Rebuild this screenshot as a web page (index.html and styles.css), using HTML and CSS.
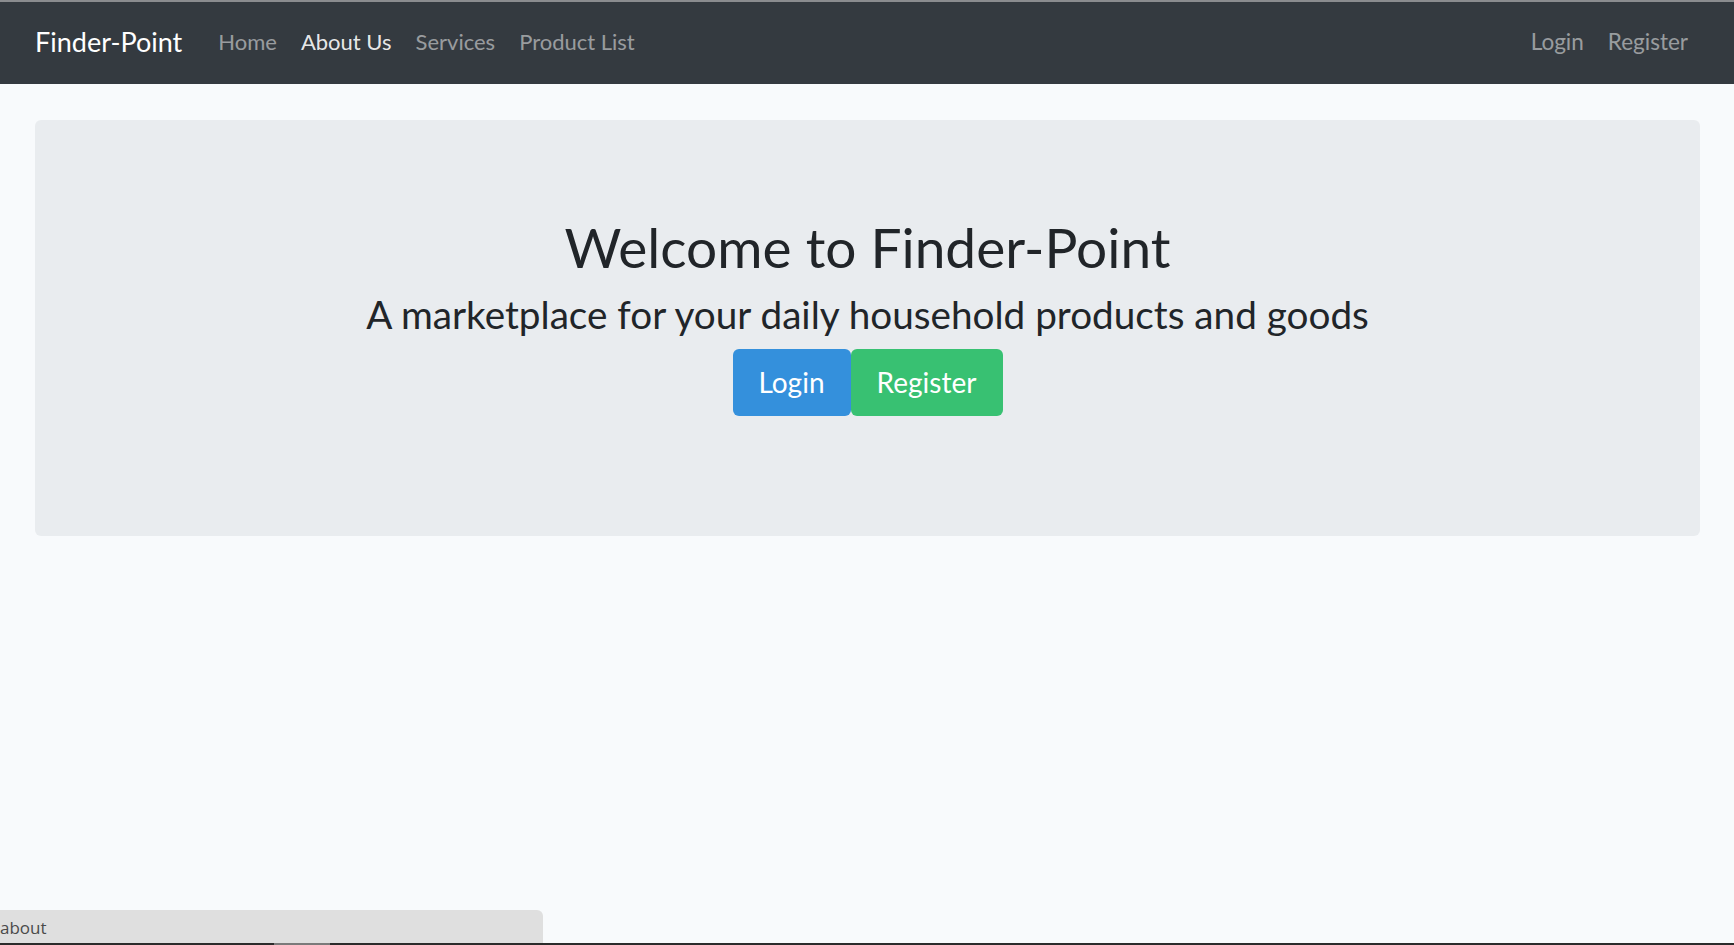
FILE: index.html
```html
<!DOCTYPE html>
<html lang="en">
<head>
<meta charset="utf-8">
<title>Finder-Point</title>
<link rel="stylesheet" href="styles.css">
</head>
<body>
<nav class="navbar">
  <a class="brand" href="#">Finder-Point</a>
  <ul class="nav-left">
    <li><a class="nav-link" href="#">Home</a></li>
    <li><a class="nav-link active" href="#">About Us</a></li>
    <li><a class="nav-link" href="#">Services</a></li>
    <li><a class="nav-link" href="#">Product List</a></li>
  </ul>
  <ul class="nav-right">
    <li><a class="nav-link" href="#">Login</a></li>
    <li><a class="nav-link" href="#">Register</a></li>
  </ul>
</nav>
<main class="content">
  <section class="jumbotron">
    <h1 class="title">Welcome to Finder-Point</h1>
    <h3 class="subtitle">A marketplace for your daily household products and goods</h3>
    <div class="actions">
      <a class="btn btn-primary" href="#">Login</a>
      <a class="btn btn-success" href="#">Register</a>
    </div>
  </section>
</main>
<div class="status-bubble">about</div>
<div class="bottom-edge"><span class="edge-thumb"></span></div>
</body>
</html>
```
FILE: styles.css
```css
html, body {
  margin: 0;
  padding: 0;
}
body {
  background: #f8fafc;
  font-family: "Lato", "Nunito", "Open Sans", sans-serif;
  color: #212529;
  height: 945px;
  overflow: hidden;
  position: relative;
}
a { text-decoration: none; }
ul { list-style: none; margin: 0; padding: 0; }

.navbar {
  box-sizing: border-box;
  height: 84px;
  border-top: 2px solid #8a8c8f;
  background: #343a40;
  display: flex;
  align-items: center;
  padding: 0 46px 4px 35px;
}
.brand {
  color: #ffffff;
  font-size: 27px;
  margin-right: 36px;
}
.nav-left, .nav-right {
  display: flex;
  gap: 24px;
}
.nav-right { margin-left: auto; }
.nav-link {
  color: rgba(255, 255, 255, 0.5);
  font-size: 22px;
}
.nav-right .nav-link { font-size: 22.5px; }
.nav-link.active { color: rgba(255, 255, 255, 0.9); }

.content {
  padding: 36px 34px 0 35px;
}
.jumbotron {
  box-sizing: border-box;
  height: 416px;
  background: #e9ecef;
  border-radius: 6px;
  display: flex;
  flex-direction: column;
  align-items: center;
  padding-top: 94px;
}
.title {
  margin: 0;
  font-weight: 400;
  font-size: 55px;
  line-height: 66px;
}
.subtitle {
  margin: 9px 0 0;
  font-weight: 400;
  font-size: 38.7px;
  line-height: 50px;
}
.actions {
  display: flex;
  margin-top: 10px;
}
.btn {
  display: block;
  height: 67px;
  box-sizing: border-box;
  line-height: 67px;
  font-size: 28px;
  color: #ffffff;
  border-radius: 6px;
  text-align: center;
}
.btn-primary { background: #3490dc; width: 118px; }
.btn-success { background: #38c172; width: 152px; }

.status-bubble {
  position: absolute;
  left: 0;
  bottom: 2px;
  width: 543px;
  height: 33px;
  box-sizing: border-box;
  background: #dfdfdf;
  border-top-right-radius: 6px;
  color: #4a4a4a;
  font-family: "Open Sans", sans-serif;
  font-size: 17px;
  line-height: 36px;
}
.bottom-edge {
  position: absolute;
  left: 0;
  right: 0;
  bottom: 0;
  height: 2px;
  background: #2b2b2b;
}
.edge-thumb {
  position: absolute;
  left: 274px;
  width: 56px;
  top: 0;
  height: 2px;
  background: #7a7a7a;
}
```
